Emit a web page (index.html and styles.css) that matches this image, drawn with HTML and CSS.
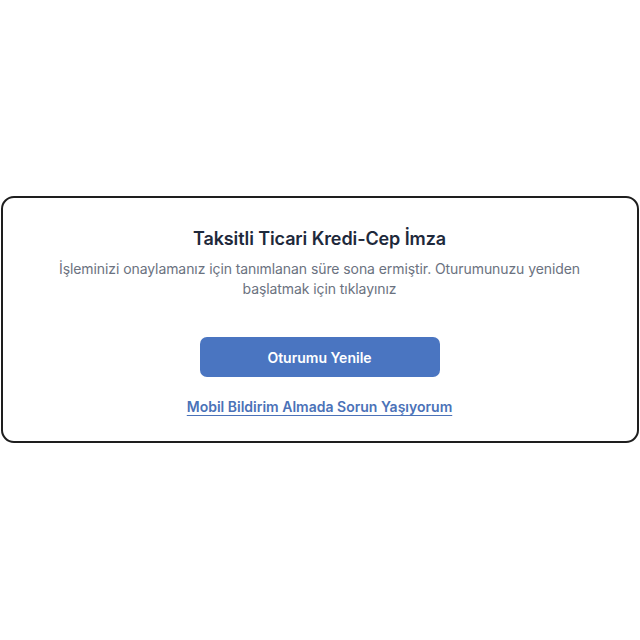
FILE: index.html
```html
<!DOCTYPE html>
<html lang="tr">
<head>
<meta charset="utf-8">
<link rel="stylesheet" href="styles.css">
</head>
<body>
<div class="page">
  <div class="card">
    <h1 class="title">Taksitli Ticari Kredi-Cep İmza</h1>
    <p class="desc">İşleminizi onaylamanız için tanımlanan süre sona ermiştir. Oturumunuzu yeniden başlatmak için tıklayınız</p>
    <button class="btn">Oturumu Yenile</button>
    <a class="link" href="#">Mobil Bildirim Almada Sorun Yaşıyorum</a>
  </div>
</div>
</body>
</html>
```
FILE: styles.css
```css
html, body {
  margin: 0;
  padding: 0;
  background: #ffffff;
}
body {
  font-family: Inter, "Noto Sans", sans-serif;
}
.page {
  width: 640px;
  height: 640px;
  display: flex;
  align-items: center;
  justify-content: center;
}
.card {
  box-sizing: border-box;
  width: 638px;
  height: 247px;
  margin-left: -1px;
  margin-top: -1px;
  background: #ffffff;
  border: 2px solid #1e1e1e;
  border-radius: 13px;
  display: flex;
  flex-direction: column;
  align-items: center;
  padding-top: 29px;
}
.title {
  margin: 0;
  font-size: 18px;
  font-weight: 600;
  line-height: 24px;
  color: #1e293b;
  letter-spacing: -0.1px;
}
.desc {
  margin: 8px 0 0;
  width: 540px;
  text-align: center;
  font-size: 14px;
  line-height: 20px;
  color: #6b7280;
  letter-spacing: -0.08px;
}
.btn {
  margin-top: 38px;
  width: 240px;
  height: 40px;
  border: none;
  border-radius: 7px;
  background: #4a75c1;
  color: #ffffff;
  font-family: Inter, "Noto Sans", sans-serif;
  font-size: 14px;
  font-weight: 600;
}
.link {
  margin-top: 20px;
  font-size: 14px;
  font-weight: 600;
  line-height: 20px;
  color: #4b72b8;
  text-decoration: underline;
  text-underline-offset: 3px;
  text-decoration-thickness: 1px;
}
```
